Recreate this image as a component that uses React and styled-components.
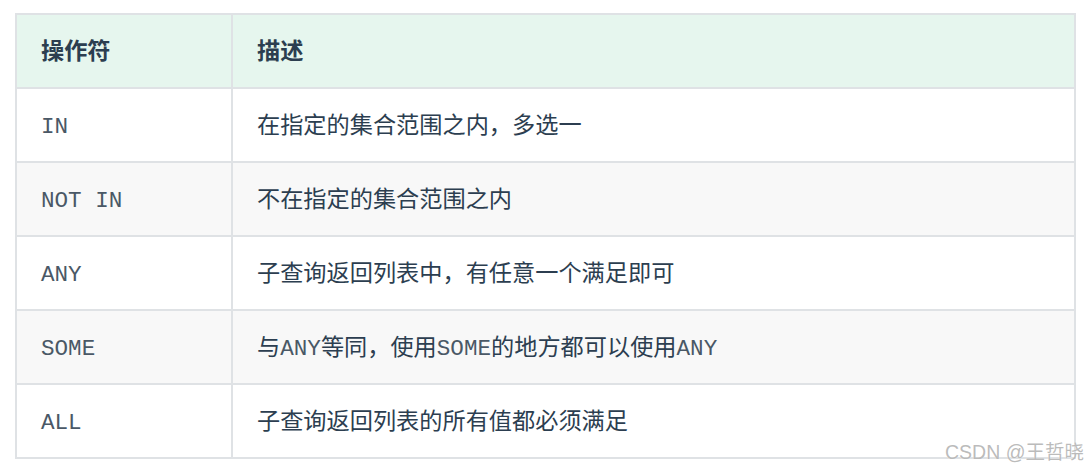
import React from 'react'
import styled, { createGlobalStyle } from "styled-components";

const GlobalStyle = createGlobalStyle`
body {
  margin:0;
  background:#fff;
}
`

const Page = styled.div`
position:relative;
width:1090px;
height:468px;
padding:13px 0 0 15px;
box-sizing:border-box;
font-family:"Noto Sans CJK SC", "Noto Sans", sans-serif;
`

const Table = styled.table`
width:1061px;
border-collapse:separate;
border-spacing:0;
border-top:2px solid #dfe2e5;
border-left:2px solid #dfe2e5;
`

const Row = styled.tr`
background-color:${props => props.$head ? '#e6f6ee' : props.$even ? '#f8f8f8' : '#fff'};
`

const Cell = styled.td`
height:74px;
box-sizing:border-box;
padding:0 0 4px 24px;
border-right:2px solid #dfe2e5;
border-bottom:2px solid #dfe2e5;
vertical-align:middle;
text-align:left;
color:#2c3e50;
font-size:23.2px;
font-weight:${props => props.$head ? 700 : 400};
width:${props => props.$first ? '216px' : 'auto'};
white-space:nowrap;
`

const Code = styled.span`
font-family:"Liberation Mono", "DejaVu Sans Mono", monospace;
font-size:22.6px;
color:#4a5866;
`

const Watermark = styled.div`
position:absolute;
right:6px;
top:436px;
font-family:"Liberation Sans", "Noto Sans CJK SC", sans-serif;
font-size:19.5px;
color:rgba(165,165,165,0.75);
text-shadow:0 0 1px #fff;
`

const rows = [
    { op: "IN", desc: ["在指定的集合范围之内，多选一"] },
    { op: "NOT IN", desc: ["不在指定的集合范围之内"] },
    { op: "ANY", desc: ["子查询返回列表中，有任意一个满足即可"] },
    { op: "SOME", desc: ["与", { code: "ANY" }, "等同，使用", { code: "SOME" }, "的地方都可以使用", { code: "ANY" }] },
    { op: "ALL", desc: ["子查询返回列表的所有值都必须满足"] },
]

const App = () => {
    return (
        <Page>
            <GlobalStyle />
            <Table>
                <thead>
                    <Row $head>
                        <Cell as="th" $head $first>操作符</Cell>
                        <Cell as="th" $head>描述</Cell>
                    </Row>
                </thead>
                <tbody>
                    {rows.map((r, i) => (
                        <Row key={r.op} $even={i % 2 === 1}>
                            <Cell $first><Code>{r.op}</Code></Cell>
                            <Cell>
                                {r.desc.map((d, j) =>
                                    typeof d === 'string' ? <span key={j}>{d}</span> : <Code key={j}>{d.code}</Code>
                                )}
                            </Cell>
                        </Row>
                    ))}
                </tbody>
            </Table>
            <Watermark>CSDN @王哲晓</Watermark>
        </Page>
    );
}

export default App;
